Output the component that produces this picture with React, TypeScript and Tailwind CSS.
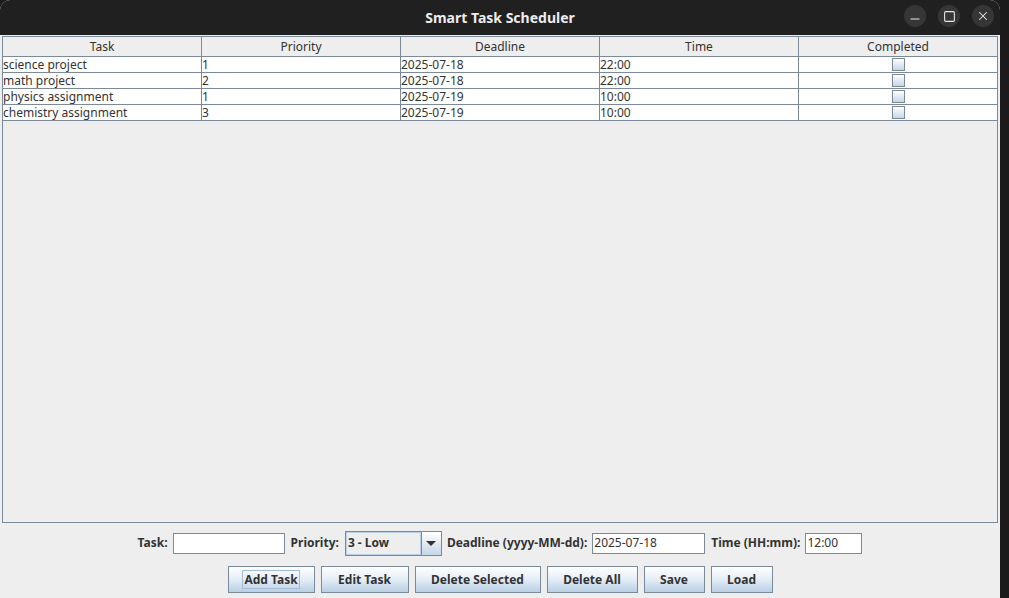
import { Minus, Square, X } from "lucide-react";

const rows = [
  { task: "science project", priority: "1", deadline: "2025-07-18", time: "22:00" },
  { task: "math project", priority: "2", deadline: "2025-07-18", time: "22:00" },
  { task: "physics assignment", priority: "1", deadline: "2025-07-19", time: "10:00" },
  { task: "chemistry assignment", priority: "3", deadline: "2025-07-19", time: "10:00" },
];

const columns = ["Task", "Priority", "Deadline", "Time", "Completed"];

const buttons = [
  { label: "Add Task", w: "w-[87px]", focus: true },
  { label: "Edit Task", w: "w-[88px]" },
  { label: "Delete Selected", w: "w-[126px]" },
  { label: "Delete All", w: "w-[91px]" },
  { label: "Save", w: "w-[61px]" },
  { label: "Load", w: "w-[62px]" },
];

const Checkbox = () => (
  <div className="w-[13px] h-[13px] border border-[#7a8a99] bg-gradient-to-b from-white to-[#c5d6e8]" />
);

const App = () => {
  return (
    <div className="w-[1009px] h-[598px] bg-[#1b1b1b] flex overflow-hidden font-['Noto_Sans',sans-serif] text-[12px] text-[#333333]">
      <div className="w-[1000px] h-full flex flex-col bg-[#eeeeee] rounded-tl-[10px] rounded-tr-[10px] overflow-hidden">
        {/* title bar */}
        <div className="h-[35px] shrink-0 bg-[#202020] flex items-center relative">
          <div className="flex-1 text-center text-[#ececec] text-[14px] font-bold">Smart Task Scheduler</div>
          <div className="absolute right-[6px] top-[5px] flex gap-[12px]">
            <div className="w-[22px] h-[22px] rounded-full bg-[#363636] flex items-center justify-center text-[#e8e8e8]">
              <Minus size={14} strokeWidth={1.8} className="mt-[6px]" />
            </div>
            <div className="w-[22px] h-[22px] rounded-full bg-[#363636] flex items-center justify-center text-[#e8e8e8]">
              <Square size={13} strokeWidth={2} />
            </div>
            <div className="w-[22px] h-[22px] rounded-full bg-[#363636] flex items-center justify-center text-[#e8e8e8]">
              <X size={14} strokeWidth={1.8} />
            </div>
          </div>
        </div>

        {/* table */}
        <div className="mx-[2px] mt-[1px] h-[487px] border border-[#7a8a99] flex flex-col">
          <div className="flex h-[20px] bg-[#eeeeee] border-b border-[#7a8a99]">
            {columns.map((c, i) => (
              <div
                key={c}
                className={`${i === 4 ? "flex-1" : "w-[199px] border-r border-[#7a8a99]"} flex items-center justify-center leading-none`}
              >
                {c}
              </div>
            ))}
          </div>
          {rows.map((r) => (
            <div key={r.task} className="flex h-[16px] bg-white border-b border-[#7a8a99] leading-none">
              <div className="w-[199px] border-r border-[#7a8a99] flex items-center">{r.task}</div>
              <div className="w-[199px] border-r border-[#7a8a99] flex items-center">{r.priority}</div>
              <div className="w-[199px] border-r border-[#7a8a99] flex items-center">{r.deadline}</div>
              <div className="w-[199px] border-r border-[#7a8a99] flex items-center">{r.time}</div>
              <div className="flex-1 flex items-center justify-center">
                <Checkbox />
              </div>
            </div>
          ))}
        </div>

        {/* form */}
        <div className="flex items-center justify-center gap-[5px] mt-[8px] h-[24px] font-bold">
          <span>Task:</span>
          <div className="w-[112px] h-[21px] bg-white border border-[#7a8a99]" />
          <span className="ml-[1px]">Priority:</span>
          <div className="flex h-[25px] border border-[#7a8a99] ml-[1px]">
            <div className="w-[75px] bg-[#eeeeee] border border-[#b8cfe5] flex items-center pl-[1px]">3 - Low</div>
            <div className="w-[20px] border-l border-[#7a8a99] bg-gradient-to-b from-white to-[#c5d6e8] flex items-center justify-center">
              <div className="w-0 h-0 border-l-[5px] border-r-[5px] border-t-[5px] border-l-transparent border-r-transparent border-t-[#333333]" />
            </div>
          </div>
          <span>Deadline (yyyy-MM-dd):</span>
          <div className="w-[113px] h-[21px] bg-white border border-[#7a8a99] flex items-center pl-[1px] font-normal">2025-07-18</div>
          <span className="ml-[1px]">Time (HH:mm):</span>
          <div className="w-[57px] h-[21px] bg-white border border-[#7a8a99] flex items-center pl-[1px] font-normal">12:00</div>
        </div>

        <div className="flex items-center justify-center gap-[6px] mt-[11px] font-bold">
          {buttons.map((b) => (
            <div
              key={b.label}
              className={`${b.w} h-[27px] border border-[#7a8a99] bg-gradient-to-b from-white via-[#e4edf6] to-[#b9cfe4] flex items-center justify-center`}
            >
              <span className={b.focus ? "border border-[#a3bcd6] px-[1px] leading-[17px]" : ""}>{b.label}</span>
            </div>
          ))}
        </div>
      </div>
    </div>
  );
};

export default App;
